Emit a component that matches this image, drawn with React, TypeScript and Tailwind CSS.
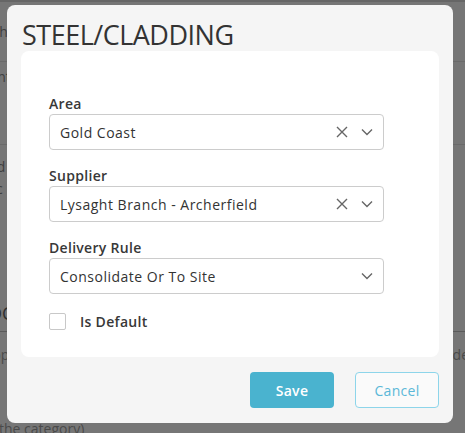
import React from 'react'

const XIcon = () => (
  <svg width="12" height="12" viewBox="0 0 12 12" className="text-[#666]">
    <path d="M1 1 L11 11 M11 1 L1 11" stroke="currentColor" strokeWidth="1.4" fill="none" />
  </svg>
)

const Chevron = () => (
  <svg width="12" height="8" viewBox="0 0 12 8" className="text-[#666]">
    <path d="M1 1.5 L6 6.5 L11 1.5" stroke="currentColor" strokeWidth="1.4" fill="none" />
  </svg>
)

const SelectField = ({ label, value, clearable = true }: { label: string; value: string; clearable?: boolean }) => (
  <div className="flex flex-col">
    <label className="h-[21px] leading-[21px] text-[14px] font-semibold text-[#383838] tracking-[0.3px]">{label}</label>
    <div className="h-[36px] w-[335px] rounded-[4px] border border-[#cccccc] bg-white flex items-center pl-[10px] pr-[10px]">
      <span className="flex-1 text-[14px] text-[#333] tracking-[0.5px]">{value}</span>
      {clearable && (
        <span className="mr-[13px] flex items-center">
          <XIcon />
        </span>
      )}
      <span className="flex items-center">
        <Chevron />
      </span>
    </div>
  </div>
)

export default function App() {
  return (
    <div className="relative w-[465px] h-[433px] overflow-hidden bg-[#767676] font-['Open_Sans',sans-serif]">
      {/* Page behind the overlay */}
      <div className="flex flex-col text-[14px] text-[#3f3f3f] border-t-2 border-[#666]">
        <div className="h-[59px] flex items-center -ml-[22px]">Path</div>
        <div className="border-t border-[#6a6a6a]" />
        <div className="h-[82px] flex flex-col justify-center gap-[4px] -ml-[30px] leading-[22px]">
          <div>Quanti</div>
          <div>Unit</div>
          <div className="text-[#555]">Per</div>
        </div>
        <div className="border-t border-[#6a6a6a]" />
        <div className="h-[94px] flex flex-col justify-center -ml-[28px] leading-[22px]">
          <div>Build</div>
          <div>Spec</div>
          <div className="text-[#555] mt-[6px]">Per</div>
        </div>
        <div className="h-[92px] flex items-end pb-[4px] -ml-[12px] text-[18px] text-[#2f2f2f]">OC</div>
        <div className="border-t border-[#5a5a5a]" />
        <div className="h-[90px] flex flex-col pt-[12px] leading-[22px] text-[#4a4a4a]">
          <div className="flex justify-between">
            <span className="-ml-[24px]">Supp</span>
            <span className="-mr-[4px]">Side</span>
          </div>
          <div className="-ml-[24px]">Per</div>
        </div>
        <div className="-ml-[1px] text-[#4a4a4a] leading-[14px]">the category)</div>
      </div>

      {/* Modal */}
      <div className="absolute left-[7px] top-[5px] w-[446px] h-[418px] rounded-[8px] bg-[#f5f5f5] px-[14px] flex flex-col">
        <h2 className="pl-[1px] mt-[14px] h-[32px] leading-[32px] text-[27px] text-[#333] tracking-[-0.5px]">STEEL/CLADDING</h2>
        <div className="h-[306px] rounded-[8px] bg-white px-[28px] pt-[42px] flex flex-col gap-[15px]">
          <SelectField label="Area" value="Gold Coast" />
          <SelectField label="Supplier" value="Lysaght Branch - Archerfield" />
          <SelectField label="Delivery Rule" value="Consolidate Or To Site" clearable={false} />
          <label className="mt-[2px] flex items-center gap-[14px]">
            <span className="w-[17px] h-[17px] rounded-[2px] border border-[#c8c8c8] bg-white" />
            <span className="text-[14px] font-semibold text-[#383838] tracking-[0.3px]">Is Default</span>
          </label>
        </div>
        <div className="mt-[15px] flex justify-end gap-[21px]">
          <button className="w-[84px] h-[36px] rounded-[4px] bg-[#4ab3cf] text-white text-[14px] font-semibold tracking-[0.3px]">Save</button>
          <button className="w-[84px] h-[36px] rounded-[4px] border border-[#8dd5ea] bg-[#fafafa] text-[#5bb8d8] text-[14px] tracking-[0.3px]">Cancel</button>
        </div>
      </div>
    </div>
  )
}
